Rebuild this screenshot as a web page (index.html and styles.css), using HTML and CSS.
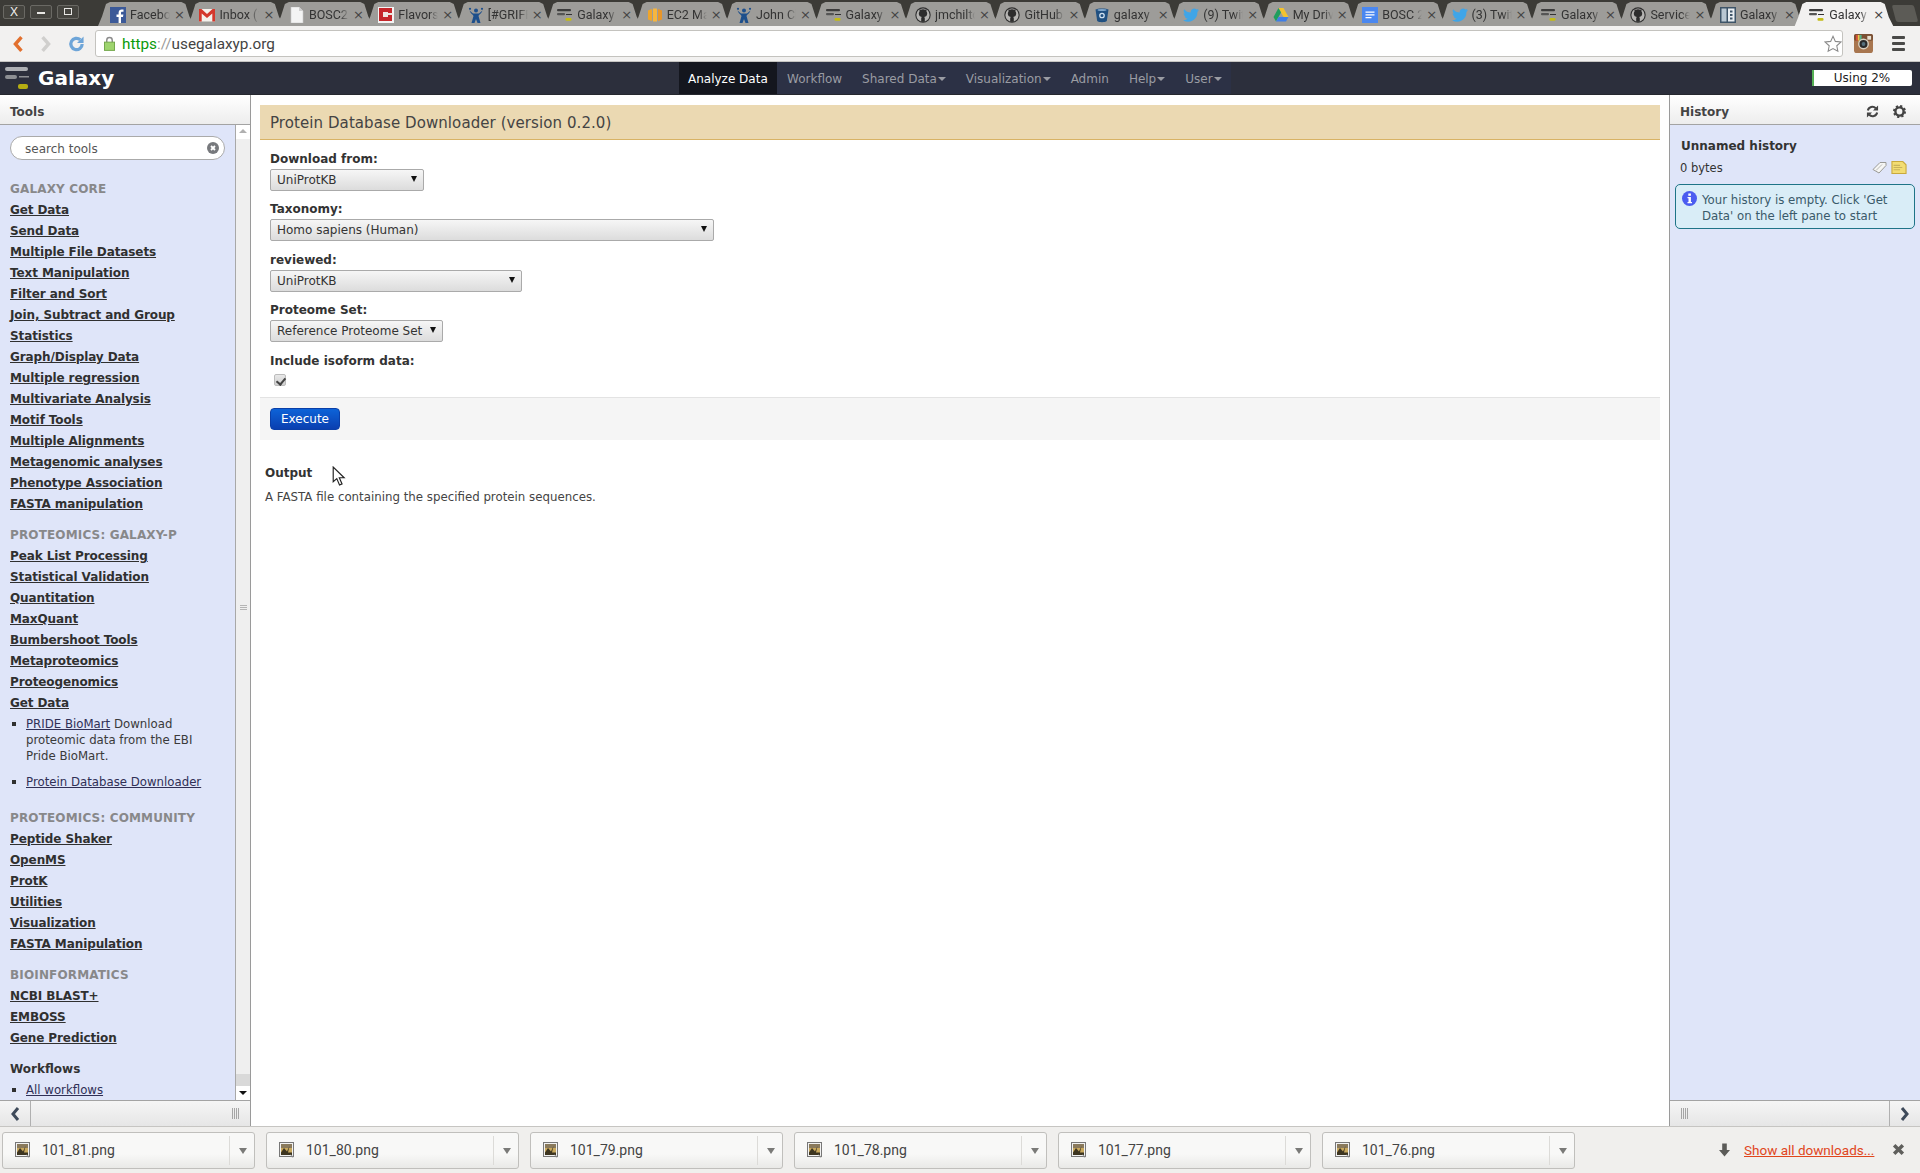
FILE: index.html
```html
<!DOCTYPE html>
<html lang="en">
<head>
<meta charset="utf-8">
<title>Galaxy</title>
<link rel="stylesheet" href="styles.css">
</head>
<body>
<svg class="defs" aria-hidden="true">
  <symbol id="i-fb" viewBox="0 0 16 16"><rect width="16" height="16" fill="#3b5998"/><path d="M11 16V10h2l.4-2.4H11V6c0-.8.3-1.2 1.2-1.2h1.3V2.6c-.5-.1-1.2-.1-1.9-.1C10 2.5 8.6 3.700 8.600 5.800v1.800H6.500V10h2.100v6z" fill="#fff"/></symbol>
  <symbol id="i-gm" viewBox="0 0 16 16"><rect y="2" width="16" height="12.500" fill="#f4f1ec"/><path d="M0 2h2.500L8 7l5.500-5H16v12.500h-2.700V6.500L8 11 2.700 6.500v8H0z" fill="#d4382c"/></symbol>
  <symbol id="i-doc" viewBox="0 0 16 16"><path d="M2 0h8l4 4v12H2z" fill="#f4f4f4" stroke="#c9c9c9" stroke-width=".6"/><path d="M10 0v4h4z" fill="#cfcfcf"/></symbol>
  <symbol id="i-fl" viewBox="0 0 16 16"><rect width="16" height="16" fill="#f3f3f3"/><rect x="1" y="1" width="13" height="13" fill="#c5262a"/><rect x="5" y="5" width="5" height="5" fill="#efe6e0"/><rect x="9" y="6" width="6" height="2" fill="#efe6e0"/></symbol>
  <symbol id="i-jira" viewBox="0 0 16 16"><circle cx="8" cy="3.500" r="2" fill="#1d4f8c"/><circle cx="2" cy="1.800" r="1.100" fill="#1d4f8c"/><circle cx="14" cy="1.800" r="1.100" fill="#1d4f8c"/><path d="M1.500 3.500C3 7 5 7.500 5.500 9L3.500 16h3L8 12l1.500 4h3l-2-7c.5-1.500 2.500-2 4-5.500L11 6.500H5z" fill="#1d4f8c"/></symbol>
  <symbol id="i-gx" viewBox="0 0 16 16"><rect x="0" y="2" width="14" height="2.300" rx="1" fill="#3c3c3c"/><rect x="0" y="6" width="8" height="2.300" rx="1" fill="#555"/><rect x="9" y="7" width="6" height="1" fill="#333"/><rect x="8.500" y="11" width="6" height="2.800" rx="1" fill="#c3bb16"/></symbol>
  <symbol id="i-ec2" viewBox="0 0 16 16"><path d="M1 3.500 5 2v12l-4-1.500z" fill="#f0a52b"/><path d="M6 1.500h4v13H6z" fill="#f7b63e"/><path d="M11 2l4 1.500v9L11 14z" fill="#e8962a"/></symbol>
  <symbol id="i-gh" viewBox="0 0 16 16"><circle cx="8" cy="8" r="7.700" fill="#2d2d2d"/><circle cx="8" cy="8" r="6.600" fill="#b5b4b2"/><path d="M8 2.200c-1 0-1.600.3-2 .5L4.500 2.300v2.200C4 5.100 3.800 5.800 3.800 6.600c0 2 1.100 3.200 3 3.500-.5.400-.6.900-.6 1.500v3.200h3.600v-3.200c0-.6-.1-1.100-.6-1.500 1.900-.3 3-1.500 3-3.500 0-.8-.2-1.500-.7-2.100V2.300L10 2.700c-.4-.2-1-.5-2-.5z" fill="#2d2d2d"/></symbol>
  <symbol id="i-bb" viewBox="0 0 16 16"><path d="M1.500 2.500C3 1 13 1 14.500 2.500L12.800 14c-1.500 1.600-8.100 1.600-9.600 0z" fill="#205081"/><ellipse cx="8" cy="3" rx="4.500" ry="1" fill="#7fa7cc"/><circle cx="8" cy="8.500" r="2.200" fill="none" stroke="#cfe0ef" stroke-width="1.300"/></symbol>
  <symbol id="i-tw" viewBox="0 0 16 16"><path d="M16 3.100c-.6.300-1.200.4-1.900.5.700-.4 1.200-1 1.400-1.800-.6.400-1.300.6-2.100.8A3.300 3.300 0 0 0 7.800 5.600C5.100 5.500 2.700 4.200 1.100 2.200.3 3.700.7 5.600 2.100 6.600c-.5 0-1-.2-1.500-.4 0 1.600 1.100 3 2.600 3.300-.5.100-1 .1-1.500 0 .4 1.300 1.600 2.200 3.100 2.300A6.600 6.600 0 0 1 0 13.200 9.300 9.300 0 0 0 14.400 5c.6-.5 1.200-1.100 1.600-1.900z" fill="#3fa5e8"/></symbol>
  <symbol id="i-dr" viewBox="0 0 16 16"><path d="M5.500 1h5l5 9h-5z" fill="#f3c22f"/><path d="M5.500 1 .5 10l2.500 4.500L8 5.500z" fill="#1e9e5e"/><path d="M3 14.500h10l2.500-4.500h-10z" fill="#3f7ee8"/></symbol>
  <symbol id="i-gd" viewBox="0 0 16 16"><rect width="16" height="16" fill="#4a87f0"/><path d="M3.500 4.500h9v1.200h-9zM3.500 7.300h9v1.200h-9zM3.500 10.100h6v1.200h-6z" fill="#fff"/></symbol>
  <symbol id="i-tb" viewBox="0 0 16 16"><rect width="16" height="16" fill="#3e5468"/><rect x="1.500" y="1.500" width="5" height="13" fill="#b9c7d2"/><rect x="8" y="1.500" width="6.500" height="13" fill="#e8edf1"/><path d="M10 3.500h2.500v2H10zM10 7h2.500v2H10zM10 10.500h2.500v2H10z" fill="#3e5468"/></symbol>
  <symbol id="i-png" viewBox="0 0 16 16"><rect x=".5" y=".5" width="14" height="14" fill="#f2f2f2" stroke="#777"/><rect x="2" y="2" width="11" height="11" fill="#c9a95e"/><rect x="2" y="2" width="11" height="4" fill="#8a7a5c"/><path d="M5 6l3 3.500L10.500 4 9 10.500H13V13H2v-2.500z" fill="#3d3520"/><path d="M11 12l4 3-2 .5z" fill="#888"/></symbol>
</svg>

<header class="tabstrip">
  <div class="winctl">
    <span class="winbtn">X</span>
    <span class="winbtn"><i class="min"></i></span>
    <span class="winbtn"><i class="rest"></i></span>
  </div>
  <nav class="tabs">
    <div class="tab"><svg class="fav"><use href="#i-fb"/></svg><span class="tt">Facebook</span><b class="x">×</b></div>
    <div class="tab"><svg class="fav"><use href="#i-gm"/></svg><span class="tt">Inbox (1</span><b class="x">×</b></div>
    <div class="tab"><svg class="fav"><use href="#i-doc"/></svg><span class="tt">BOSC2</span><b class="x">×</b></div>
    <div class="tab"><svg class="fav"><use href="#i-fl"/></svg><span class="tt">Flavors</span><b class="x">×</b></div>
    <div class="tab"><svg class="fav"><use href="#i-jira"/></svg><span class="tt">[#GRIFF</span><b class="x">×</b></div>
    <div class="tab"><svg class="fav"><use href="#i-gx"/></svg><span class="tt">Galaxy</span><b class="x">×</b></div>
    <div class="tab"><svg class="fav"><use href="#i-ec2"/></svg><span class="tt">EC2 Ma</span><b class="x">×</b></div>
    <div class="tab"><svg class="fav"><use href="#i-jira"/></svg><span class="tt">John Ch</span><b class="x">×</b></div>
    <div class="tab"><svg class="fav"><use href="#i-gx"/></svg><span class="tt">Galaxy</span><b class="x">×</b></div>
    <div class="tab"><svg class="fav"><use href="#i-gh"/></svg><span class="tt">jmchilton</span><b class="x">×</b></div>
    <div class="tab"><svg class="fav"><use href="#i-gh"/></svg><span class="tt">GitHub</span><b class="x">×</b></div>
    <div class="tab"><svg class="fav"><use href="#i-bb"/></svg><span class="tt">galaxy</span><b class="x">×</b></div>
    <div class="tab"><svg class="fav"><use href="#i-tw"/></svg><span class="tt">(9) Twit</span><b class="x">×</b></div>
    <div class="tab"><svg class="fav"><use href="#i-dr"/></svg><span class="tt">My Driv</span><b class="x">×</b></div>
    <div class="tab"><svg class="fav"><use href="#i-gd"/></svg><span class="tt">BOSC 2</span><b class="x">×</b></div>
    <div class="tab"><svg class="fav"><use href="#i-tw"/></svg><span class="tt">(3) Twit</span><b class="x">×</b></div>
    <div class="tab"><svg class="fav"><use href="#i-gx"/></svg><span class="tt">Galaxy</span><b class="x">×</b></div>
    <div class="tab"><svg class="fav"><use href="#i-gh"/></svg><span class="tt">Services</span><b class="x">×</b></div>
    <div class="tab"><svg class="fav"><use href="#i-tb"/></svg><span class="tt">Galaxy</span><b class="x">×</b></div>
    <div class="tab active"><svg class="fav"><use href="#i-gx"/></svg><span class="tt">Galaxy</span><b class="x">×</b></div>
    <div class="newtab"></div>
  </nav>
</header>

<div class="toolbar">
  <svg class="navico" viewBox="0 0 14 20"><path d="M11 2 4 10l7 8" fill="none" stroke="#e2702e" stroke-width="4"/></svg>
  <svg class="navico" viewBox="0 0 14 20"><path d="M3 2l7 8-7 8" fill="none" stroke="#d0cfcd" stroke-width="4"/></svg>
  <svg class="navico reload" viewBox="0 0 18 18"><path d="M15 9a6 6 0 1 1-2-4.500" fill="none" stroke="#6ea5d8" stroke-width="3.400"/><path d="M16.500 1v7h-7z" fill="#6ea5d8"/></svg>
  <div class="omnibox">
    <svg class="lock" viewBox="0 0 12 16"><path d="M3 7V4.500a3 3 0 0 1 6 0V7" fill="none" stroke="#8c8c8c" stroke-width="1.600"/><rect x=".5" y="6.500" width="11" height="9" fill="#9ed46e" stroke="#6ea345"/></svg>
    <span class="url"><span class="https">https</span><span class="sep">://</span>usegalaxyp.org</span>
    <svg class="star" viewBox="0 0 20 20"><path d="M10 1.500l2.600 5.600 6.100.7-4.500 4.200 1.200 6-5.400-3-5.400 3 1.200-6L1.300 7.800l6.100-.7z" fill="#fff" stroke="#8a8a8a" stroke-width="1.200"/></svg>
  </div>
  <svg class="insta" viewBox="0 0 20 20"><rect width="20" height="20" rx="3" fill="#a8764f"/><rect y="0" width="20" height="7" rx="2" fill="#7a4f33"/><rect x="2" y="1" width="2" height="6" fill="#d94c3a"/><rect x="4" y="1" width="2" height="6" fill="#e8c84a"/><rect x="6" y="1" width="2" height="6" fill="#52b48a"/><rect x="14" y="2" width="4" height="4" fill="#e8e0d0"/><circle cx="10" cy="10.500" r="5" fill="#2a2a2a" stroke="#d8d0c0" stroke-width="1.500"/><circle cx="10" cy="10.500" r="2" fill="#56707c"/></svg>
  <div class="hamburger"><i></i><i></i><i></i></div>
</div>

<div class="masthead">
  <div class="brand">
    <svg class="brandmark" viewBox="0 0 26 26"><rect x="0" y="2" width="23" height="4" rx="2" fill="#aeb0b4"/><rect x="0" y="10" width="12" height="4" rx="2" fill="#8d8f93"/><rect x="14" y="11" width="10" height="1.500" fill="#8d8f93"/><rect x="13" y="19" width="10" height="5" rx="2" fill="#b5ad12"/></svg>
    <span class="brandname">Galaxy</span>
  </div>
  <ul class="mainnav">
    <li class="current">Analyze Data</li>
    <li>Workflow</li>
    <li class="drop">Shared Data</li>
    <li class="drop">Visualization</li>
    <li>Admin</li>
    <li class="drop">Help</li>
    <li class="drop">User</li>
  </ul>
  <div class="quota"><span class="quotabar"></span>Using 2%</div>
</div>

<div class="workspace">
  <aside class="panel leftpanel">
    <div class="panelhead">Tools</div>
    <div class="panelbody">
      <div class="toollist">
        <div class="search"><span>search tools</span><svg class="clear" viewBox="0 0 12 12"><circle cx="6" cy="6" r="6" fill="#77797d"/><path d="M4 4l4 4M8 4l-4 4" stroke="#fff" stroke-width="1.800"/></svg></div>
        <h3 class="section first">GALAXY CORE</h3>
        <a class="cat">Get Data</a>
        <a class="cat">Send Data</a>
        <a class="cat">Multiple File Datasets</a>
        <a class="cat">Text Manipulation</a>
        <a class="cat">Filter and Sort</a>
        <a class="cat">Join, Subtract and Group</a>
        <a class="cat">Statistics</a>
        <a class="cat">Graph/Display Data</a>
        <a class="cat">Multiple regression</a>
        <a class="cat">Multivariate Analysis</a>
        <a class="cat">Motif Tools</a>
        <a class="cat">Multiple Alignments</a>
        <a class="cat">Metagenomic analyses</a>
        <a class="cat">Phenotype Association</a>
        <a class="cat">FASTA manipulation</a>
        <h3 class="section">PROTEOMICS: GALAXY-P</h3>
        <a class="cat">Peak List Processing</a>
        <a class="cat">Statistical Validation</a>
        <a class="cat">Quantitation</a>
        <a class="cat">MaxQuant</a>
        <a class="cat">Bumbershoot Tools</a>
        <a class="cat">Metaproteomics</a>
        <a class="cat">Proteogenomics</a>
        <a class="cat">Get Data</a>
        <ul class="tools">
          <li><a>PRIDE BioMart</a> Download proteomic data from the EBI Pride BioMart.</li>
          <li><a>Protein Database Downloader</a></li>
        </ul>
        <h3 class="section comm">PROTEOMICS: COMMUNITY</h3>
        <a class="cat">Peptide Shaker</a>
        <a class="cat">OpenMS</a>
        <a class="cat">ProtK</a>
        <a class="cat">Utilities</a>
        <a class="cat">Visualization</a>
        <a class="cat">FASTA Manipulation</a>
        <h3 class="section">BIOINFORMATICS</h3>
        <a class="cat">NCBI BLAST+</a>
        <a class="cat">EMBOSS</a>
        <a class="cat">Gene Prediction</a>
        <h3 class="section wf">Workflows</h3>
        <ul class="tools">
          <li><a>All workflows</a></li>
        </ul>
      </div>
      <div class="scrollbar">
        <span class="sbtn up"></span>
        <span class="thumb"><i></i></span>
        <span class="strack"></span>
        <span class="sbtn down"></span>
      </div>
    </div>
    <div class="panelfoot">
      <span class="footbtn"><svg viewBox="0 0 10 16"><path d="M8 2 3 8l5 6" fill="none" stroke="#3e4a5a" stroke-width="3"/></svg></span>
      <span class="grip right"></span>
    </div>
  </aside>

  <main class="center">
    <div class="toolform">
      <div class="formtitle">Protein Database Downloader (version 0.2.0)</div>
      <form class="formbody">
        <div class="row"><label>Download from:</label><span class="sel w-a"><select><option>UniProtKB</option></select></span></div>
        <div class="row"><label>Taxonomy:</label><span class="sel w-b"><select><option>Homo sapiens (Human)</option></select></span></div>
        <div class="row"><label>reviewed:</label><span class="sel w-c"><select><option>UniProtKB</option></select></span></div>
        <div class="row"><label>Proteome Set:</label><span class="sel w-d"><select><option>Reference Proteome Set</option></select></span></div>
        <div class="row last"><label>Include isoform data:</label><input class="check" type="checkbox" checked></div>
      </form>
      <div class="formfoot"><button class="exec" type="button">Execute</button></div>
    </div>
    <section class="help">
      <h4>Output</h4>
      <p>A FASTA file containing the specified protein sequences.</p>
    </section>
    <svg class="cursor" viewBox="0 0 13 19"><path d="M1 1v14l3.400-3 2.600 6 2.400-1-2.600-5.800h4.600z" fill="#fff" stroke="#222" stroke-width="1.100"/></svg>
  </main>

  <aside class="panel rightpanel">
    <div class="panelhead histhead">
      <span>History</span>
      <span class="headicons">
        <svg viewBox="0 0 14 14"><path d="M2 6a5 5 0 0 1 8.500-2.500M12 8a5 5 0 0 1-8.500 2.500" fill="none" stroke="#444" stroke-width="2.200"/><path d="M13 .5V6H7.500zM1 13.500V8h5.500z" fill="#444"/></svg>
        <svg viewBox="0 0 14 14"><circle cx="7" cy="7" r="4.400" fill="none" stroke="#444" stroke-width="2.600"/><circle cx="7" cy="7" r="5.800" fill="none" stroke="#444" stroke-width="2.400" stroke-dasharray="2.300 2.250"/></svg>
      </span>
    </div>
    <div class="panelbody histbody">
      <div class="histname">Unnamed history</div>
      <div class="histmeta">
        <span>0 bytes</span>
        <span class="histicons">
          <svg viewBox="0 0 16 12"><path d="M1 8l7-7h6v3l-7 7.500z" fill="#f6f6f4" stroke="#9a9a96"/><path d="M4 9l6-6" stroke="#b8b8b4"/></svg>
          <svg viewBox="0 0 14 12"><path d="M.5.500h10l3 3v8H.5z" fill="#f3dd72" stroke="#c9a93c"/><path d="M2 4h6M2 6h8M2 8h6" stroke="#c9b25a"/></svg>
        </span>
      </div>
      <div class="infobox">
        <svg class="infoic" viewBox="0 0 15 15"><circle cx="7.500" cy="7.500" r="7.500" fill="#4b5cf0"/><rect x="6.300" y="2.500" width="2.600" height="2.300" fill="#fff"/><path d="M5.500 6h3.400v5h1.100v1.300H5.500V11h1V7.300h-1z" fill="#fff"/></svg>
        <span>Your history is empty. Click 'Get Data' on the left pane to start</span>
      </div>
    </div>
    <div class="panelfoot">
      <span class="grip left"></span>
      <span class="footbtn rb"><svg viewBox="0 0 10 16"><path d="M2 2l5 6-5 6" fill="none" stroke="#3e4a5a" stroke-width="3"/></svg></span>
    </div>
  </aside>
</div>

<footer class="downloads">
  <div class="dl"><svg class="dlic"><use href="#i-png"/></svg><span class="dlname">101_81.png</span><span class="dlarrow"></span></div>
  <div class="dl"><svg class="dlic"><use href="#i-png"/></svg><span class="dlname">101_80.png</span><span class="dlarrow"></span></div>
  <div class="dl"><svg class="dlic"><use href="#i-png"/></svg><span class="dlname">101_79.png</span><span class="dlarrow"></span></div>
  <div class="dl"><svg class="dlic"><use href="#i-png"/></svg><span class="dlname">101_78.png</span><span class="dlarrow"></span></div>
  <div class="dl"><svg class="dlic"><use href="#i-png"/></svg><span class="dlname">101_77.png</span><span class="dlarrow"></span></div>
  <div class="dl"><svg class="dlic"><use href="#i-png"/></svg><span class="dlname">101_76.png</span><span class="dlarrow"></span></div>
  <div class="dlend">
    <svg class="dlget" viewBox="0 0 12 14"><path d="M3.500 0h5v7H12l-6 7-6-7h3.500z" fill="#5b5b58"/></svg>
    <a class="showall">Show all downloads...</a>
    <svg class="dlclose" viewBox="0 0 12 12"><path d="M2 2l8 8M10 2l-8 8" stroke="#5f5f5c" stroke-width="3.200"/></svg>
  </div>
</footer>
</body>
</html>
```
FILE: styles.css
```css
* { box-sizing: border-box; }
html, body { margin: 0; height: 100%; }
body {
  display: flex;
  flex-direction: column;
  height: 100vh;
  overflow: hidden;
  background: #fff;
  color: #333;
  font: 12px/15px "DejaVu Sans", sans-serif;
}
.defs { position: absolute; width: 0; height: 0; }

/* Browser tab strip */
.tabstrip {
  flex: none;
  display: flex;
  height: 26px;
  background: #3c3b37;
  overflow: hidden;
}
.winctl { flex: none; display: flex; gap: 5px; width: 99px; padding: 5px 0 0 3px; align-items: flex-start; }
.winbtn {
  width: 22px;
  height: 14px;
  border: 1px solid #6a6964;
  border-radius: 2px;
  background: #45443f;
  color: #f2f1ef;
  font: 12px/12px "Liberation Sans", sans-serif;
  text-align: center;
  position: relative;
}
.min { display: block; width: 8px; height: 2px; background: #e8e7e4; margin: 6px auto 0; }
.rest { display: block; width: 8px; height: 7px; border: 1px solid #e8e7e4; margin: 2px auto 0; }
.tabs { flex: 1; display: flex; padding-top: 2px; }
.tab {
  flex: none;
  position: relative;
  display: flex;
  align-items: center;
  width: 89.45px;
  height: 24px;
  padding: 1px 0 0 11px;
  color: #333;
  font: 12.500px/15px Roboto, sans-serif;
}
.tab::before {
  content: "";
  position: absolute;
  inset: 0 -6px 0 -1px;
  background: #9d9c99;
  clip-path: polygon(0 100%, 4px 60%, 8px 8%, 12px 0, calc(100% - 13px) 0, calc(100% - 9px) 8%, calc(100% - 5px) 60%, 100% 100%);
}
.tab.active::before {
  background: #f2f1f0;
  inset: 0 -6px -1px -4px;
}
.tab > * { position: relative; }
.fav { flex: none; width: 16px; height: 16px; }
.tt {
  width: 40px;
  margin-left: 4px;
  overflow: hidden;
  white-space: nowrap;
  -webkit-mask-image: linear-gradient(90deg, #000 78%, transparent);
  mask-image: linear-gradient(90deg, #000 78%, transparent);
}
.x { margin-left: 4px; font: 400 13px/15px "DejaVu Sans", sans-serif; color: #444; }
.newtab {
  flex: none;
  width: 22px;
  height: 17px;
  margin: 3px 0 0 6px;
  background: #5c5b56;
  border-radius: 2px;
  transform: skewX(15deg);
}

/* Browser toolbar */
.toolbar {
  flex: none;
  display: flex;
  align-items: center;
  height: 36px;
  padding: 0 0 0 12px;
  background: #f2f1f0;
  border-bottom: 1px solid #c6c5c2;
}
.navico { flex: none; width: 12px; height: 18px; margin-right: 16px; }
.reload { width: 17px; margin-right: 10px; }
.omnibox {
  flex: none;
  display: flex;
  align-items: center;
  width: 1748px;
  height: 27px;
  padding: 0 0 0 8px;
  background: #fff;
  border: 1px solid #c4c3bf;
  border-radius: 3px;
}
.lock { width: 11px; height: 15px; flex: none; }
.url { flex: 1; margin-left: 7px; font: 15.300px/18px Roboto, sans-serif; color: #444; }
.https { color: #0a9a0a; }
.sep { color: #999; }
.star { width: 18px; height: 18px; flex: none; }
.insta { flex: none; width: 19px; height: 21px; margin-left: 11px; }
.hamburger { flex: none; display: flex; flex-direction: column; gap: 3px; width: 13px; margin-left: 19px; }
.hamburger i { display: block; height: 3px; background: #4a4a48; border-radius: 1px; }

/* Galaxy masthead */
.masthead {
  flex: none;
  display: flex;
  align-items: stretch;
  height: 33px;
  background: #2c2f3c;
  border-bottom: 1px solid #26282f;
}
.brand { flex: none; display: flex; align-items: center; width: 679px; padding-left: 5px; }
.brandmark { width: 26px; height: 26px; flex: none; }
.brandname { margin-left: 7px; color: #fff; font: 700 20px/24px "DejaVu Sans", sans-serif; }
.mainnav {
  flex: none;
  display: flex;
  width: 552px;
  margin: 0;
  padding: 0;
  list-style: none;
  background: #2c3145;
}
.mainnav li {
  display: flex;
  align-items: center;
  flex: none;
  padding: 2px 10px 0;
  color: #9a9ca3;
  font-size: 12px;
  white-space: nowrap;
}
.mainnav .current { background: #14161e; color: #fff; width: 98px; padding-left: 9px; padding-right: 9px; }
.drop::after {
  content: "";
  margin-left: 1px;
  border: 4px solid transparent;
  border-top-color: #9a9ca3;
  border-bottom: 0;
}
.quota {
  flex: none;
  position: relative;
  width: 100px;
  height: 16px;
  margin: 8px 8px 0 auto;
  background: #fff;
  border-radius: 2px;
  color: #222;
  text-align: center;
  font-size: 12px;
  line-height: 17px;
}
.quotabar { position: absolute; left: 0; top: 0; bottom: 0; width: 2px; background: #55b055; }

/* Panels */
.workspace { flex: 1; display: flex; min-height: 0; }
.panel { flex: none; display: flex; flex-direction: column; width: 251px; background: #fff; }
.leftpanel { border-right: 1px solid #9a9a9a; }
.rightpanel { border-left: 1px solid #9a9a9a; }
.panelhead {
  flex: none;
  height: 30px;
  padding: 0 10px;
  line-height: 34px;
  font-weight: 700;
  color: #444;
  background: linear-gradient(#fff, #ededed);
  border-bottom: 1px solid #a3a3a3;
}
.panelbody { flex: 1; min-height: 0; display: flex; background: #dfe5f9; overflow: hidden; }
.panelfoot {
  flex: none;
  display: flex;
  justify-content: space-between;
  align-items: center;
  height: 26px;
  background: linear-gradient(#f5f5f5, #e6e6e6);
  border-top: 1px solid #a3a3a3;
}
.footbtn {
  flex: none;
  display: flex;
  align-items: center;
  justify-content: center;
  width: 31px;
  height: 100%;
  border-right: 1px solid #b0b0b0;
}
.footbtn svg { width: 12px; height: 16px; }
.footbtn.rb { border-right: 0; border-left: 1px solid #b0b0b0; }
.grip {
  width: 8px;
  height: 11px;
  background: repeating-linear-gradient(90deg, #a5a5a5 0 1px, transparent 1px 2px);
}
.grip.right { margin-right: 10px; }
.grip.left { margin-left: 11px; }

/* Tool list */
.toollist { flex: 1; min-width: 0; padding: 11px 10px 0; overflow: hidden; }
.search {
  display: flex;
  align-items: center;
  justify-content: space-between;
  width: 215px;
  height: 24px;
  padding: 2px 5px 0 14px;
  background: #fff;
  border: 1px solid #aaa;
  border-radius: 12px;
  color: #555;
  font-size: 12px;
}
.clear { width: 12px; height: 12px; margin-top: -2px; }
.section {
  margin: 10px 0 0;
  height: 21px;
  font-size: 12px;
  line-height: 23px;
  font-weight: 700;
  color: #88888a;
  letter-spacing: .15px;
}
.section.first { margin-top: 18px; }
.section.comm { margin-top: 17px; }
.section.wf { color: #333; letter-spacing: 0; }
.cat { display: block; height: 21px; line-height: 23px; font-weight: 700; color: #303030; text-decoration: underline; letter-spacing: -.1px; }
.tools { margin: 3px 0 0; padding: 0 20px 0 16px; list-style: none; }
.tools li { position: relative; margin-bottom: 10px; line-height: 16px; font-size: 11.750px; color: #3a3a3a; }
.tools li::before { content: ""; position: absolute; left: -14px; top: 6px; width: 4px; height: 4px; background: #303030; }
.tools a { text-decoration: underline; color: #303056; }
.section.wf + .tools { margin-top: 3px; padding-right: 0; }

/* Panel scrollbar */
.scrollbar { flex: none; display: flex; flex-direction: column; width: 15px; border-left: 1px solid #a8a8a8; background: #d9d9d9; }
.sbtn { flex: none; display: block; height: 14px; background: #fff; position: relative; }
.sbtn::after { content: ""; position: absolute; left: 3px; border: 4px solid transparent; }
.sbtn.up::after { top: 4px; border-bottom-color: #b0b0b0; border-top: 0; }
.sbtn.down::after { top: 5px; border-top-color: #111; border-bottom: 0; }
.thumb { flex: 1; display: flex; align-items: center; justify-content: center; background: #efefef; padding-top: 3px; }
.thumb i { display: block; width: 7px; height: 6px; background: repeating-linear-gradient(#b5b5b5 0 1px, transparent 1px 2px); }
.strack { flex: none; height: 12px; }

/* Center form */
.center { flex: 1; min-width: 0; position: relative; padding: 10px 9px; background: #fff; }
.formtitle {
  height: 35px;
  padding: 0 10px;
  line-height: 36px;
  font-size: 15px;
  letter-spacing: .08px;
  color: #444;
  background: #ebd9b2;
  border-bottom: 1px solid #d8b365;
}
.formbody { padding: 11.500px 10px 0; }
.row { height: 50.500px; }
.row.last { height: 43.500px; }
.row label { display: block; height: 17px; font-weight: 700; color: #333; line-height: 15px; }
.sel { display: block; position: relative; height: 22px; }
.sel::after {
  content: "";
  position: absolute;
  right: 7px;
  top: 7px;
  border: 3.500px solid transparent;
  border-top: 6px solid #111;
  border-bottom: 0;
}
.sel select {
  appearance: none;
  -webkit-appearance: none;
  display: block;
  width: 100%;
  height: 22px;
  padding: 0 6px;
  border: 1px solid #aaa;
  border-radius: 2px;
  background: linear-gradient(#f6f6f6, #dcdcdc);
  color: #333;
  font: 12px "DejaVu Sans", sans-serif;
}
.w-a { width: 154px; }
.w-b { width: 444px; }
.w-c { width: 252px; }
.w-d { width: 173px; }
.check {
  appearance: none;
  -webkit-appearance: none;
  position: relative;
  display: block;
  width: 12px;
  height: 12px;
  margin: 3px 0 0 4px;
  background: linear-gradient(#e8e8e8, #cfcfcf);
  border: 1px solid #bcbcbc;
  border-radius: 2px;
}
.check::after {
  content: "";
  position: absolute;
  left: 3px;
  top: 1px;
  width: 4px;
  height: 7px;
  border: solid #444;
  border-width: 0 2px 2px 0;
  transform: rotate(40deg);
}
.formfoot { height: 43px; padding: 10px; background: #f5f5f5; border-top: 1px solid #e3e3e3; }
.exec {
  display: block;
  width: 70px;
  height: 22px;
  padding: 0;
  border: 1px solid #0a3fa8;
  border-radius: 4px;
  background: linear-gradient(#0d63d8, #0a3fb0);
  color: #fff;
  font: 12px "DejaVu Sans", sans-serif;
}
.help { padding: 26px 5px 0; }
.help h4 { margin: 0; font-size: 12px; line-height: 15px; font-weight: 700; color: #333; }
.help p { margin: 9px 0 0; line-height: 15px; font-size: 11.800px; color: #444; }
.cursor { position: absolute; left: 81px; top: 371px; width: 14px; height: 20px; }

/* History */
.histhead { display: flex; justify-content: space-between; padding-right: 14px; }
.headicons { display: flex; gap: 14px; align-items: center; height: 33px; }
.headicons svg { width: 13px; height: 13px; }
.histbody { flex-direction: column; padding: 13px 5px 0 5px; }
.histname { padding-left: 6px; font-weight: 700; color: #333; line-height: 16px; }
.histmeta { display: flex; justify-content: space-between; align-items: center; margin-top: 5px; padding: 1px 8px 0 5px; line-height: 16px; color: #333; font-size: 11.500px; }
.histicons { display: flex; gap: 3px; margin-top: -2px; }
.histicons svg { width: 16px; height: 13px; }
.infobox {
  display: flex;
  margin-top: 8px;
  width: 240px;
  height: 45px;
  padding: 7px 10px 0 6px;
  background: #d9edf7;
  border: 1px solid #1e7487;
  border-radius: 5px;
  font-size: 11.750px;
  line-height: 16px;
  color: #3a5a6a;
}
.infoic { flex: none; width: 15px; height: 15px; margin: -1px 5px 0 0; }

/* Download shelf */
.downloads {
  flex: none;
  display: flex;
  gap: 11px;
  height: 47px;
  padding: 5px 0 0 2px;
  background: #f0efed;
  border-top: 1px solid #c6c5c2;
  font: 14px/16px Roboto, sans-serif;
}
.dl {
  flex: none;
  display: flex;
  align-items: center;
  position: relative;
  width: 253px;
  height: 37px;
  padding: 0 0 2px 12px;
  background: linear-gradient(#f8f8f7 60%, #e9e9e7);
  border: 1px solid #c0bfbc;
  border-radius: 3px;
}
.dlic { flex: none; width: 16px; height: 16px; }
.dlname { margin-left: 11px; color: #444; }
.dlarrow { position: absolute; right: -1px; top: 3px; bottom: 3px; width: 26px; border-left: 1px solid #dcdbd8; }
.dlarrow::after { content: ""; position: absolute; left: 9px; top: 12px; border: 4px solid transparent; border-top: 6px solid #7a7a78; border-bottom: 0; }
.dlend { flex: 1; display: flex; align-items: center; height: 35px; padding-left: 133px; }
.dlget { width: 11px; height: 14px; flex: none; }
.showall { margin-left: 14px; color: #e0461c; text-decoration: underline; font-size: 13.500px; }
.dlclose { width: 13px; height: 13px; margin-left: 18px; flex: none; }
```
